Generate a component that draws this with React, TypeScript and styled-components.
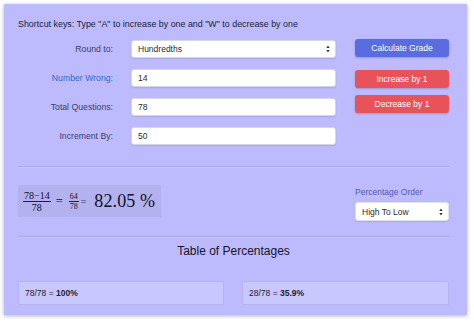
import React, { useState } from 'react'
import styled, { createGlobalStyle } from 'styled-components'

const GlobalStyle = createGlobalStyle`
  html, body {
    margin: 0;
    padding: 0;
    background: #ffffff;
  }
  body {
    font-family: 'Liberation Sans', Arial, sans-serif;
  }
`

const Panel = styled.div`
  box-sizing: border-box;
  margin: 4px;
  width: 463px;
  height: 311px;
  padding: 14px 18px 0 14px;
  background-color: #bdbbfe;
  box-shadow: 0 1px 4px rgba(40, 40, 80, 0.35);
  color: #1f1f3c;
`

const Hint = styled.p`
  margin: 0;
  font-size: 8.9px;
  line-height: 12px;
  color: #1c1c38;
  white-space: nowrap;
`

const FormRow = styled.div`
  display: flex;
  margin-top: 9px;
`

const Fields = styled.div`
  display: grid;
  grid-template-columns: 95px 205px;
  grid-auto-rows: 18px;
  column-gap: 18px;
  row-gap: 11px;
  padding-top: 1px;
  width: 318px;
`

const Label = styled.label<{ $highlight?: boolean }>`
  display: flex;
  align-items: center;
  justify-content: flex-end;
  font-size: 8.7px;
  color: ${({ $highlight }) => ($highlight ? '#2d6cc6' : '#3a3d66')};
  white-space: nowrap;
`

const Field = styled.div`
  box-sizing: border-box;
  display: flex;
  align-items: center;
  justify-content: space-between;
  height: 18px;
  padding: 0 5px 0 6px;
  background: #ffffff;
  border: 1px solid #d6d6e4;
  border-radius: 3px;
  box-shadow: 0 1px 1px rgba(60, 60, 110, 0.15);
  font-size: 8.5px;
  color: #2b2b2b;
`

const Buttons = styled.div`
  display: flex;
  flex-direction: column;
  margin-left: 19px;
  width: 94px;
`

const Button = styled.button<{ $tone: 'blue' | 'red'; $gap: number }>`
  box-sizing: border-box;
  height: 18px;
  margin-top: ${({ $gap }) => $gap}px;
  padding: 0;
  border: none;
  border-radius: 3px;
  background-color: ${({ $tone }) => ($tone === 'blue' ? '#5a6de0' : '#e8535a')};
  box-shadow: 0 1px 2px rgba(50, 40, 90, 0.25);
  color: #ffffff;
  font-family: 'Liberation Sans', Arial, sans-serif;
  font-size: 8.5px;
  cursor: pointer;
`

const Divider = styled.div<{ $top: number }>`
  height: 1px;
  margin-top: ${({ $top }) => $top}px;
  background-color: #a9a8e8;
  box-shadow: 0 1px 0 rgba(210, 210, 255, 0.5);
`

const ResultRow = styled.div`
  display: flex;
  justify-content: space-between;
  align-items: flex-start;
  margin-top: 18px;
`

const Formula = styled.div`
  box-sizing: border-box;
  display: flex;
  align-items: center;
  width: 143px;
  height: 32px;
  padding: 0 0 0 5px;
  background-color: #b3b2ee;
  font-family: 'Liberation Serif', 'Times New Roman', serif;
  color: #111122;
`

const Frac = styled.span<{ $size: number }>`
  display: inline-flex;
  flex-direction: column;
  align-items: center;
  font-size: ${({ $size }) => $size}px;
  line-height: ${({ $size }) => Math.round($size * 0.85)}px;
`

const Numer = styled.span`
  padding: 0 1px 1px;
  border-bottom: 0.8px solid #222;
`

const Denom = styled.span`
  padding-top: 1px;
`

const Eq = styled.span<{ $small?: boolean; $left: number; $right: number }>`
  margin: 0 ${({ $right }) => $right}px 0 ${({ $left }) => $left}px;
  font-size: ${({ $small }) => ($small ? 10 : 12.5)}px;
  color: ${({ $small }) => ($small ? '#3a3a5c' : '#111122')};
`

const Result = styled.span`
  font-size: 18px;
  letter-spacing: 0.1px;
  white-space: nowrap;
`

const OrderBox = styled.div`
  display: flex;
  flex-direction: column;
  width: 94px;
`

const OrderLabel = styled.span`
  font-size: 8.5px;
  line-height: 14px;
  color: #5558b4;
`

const OrderSelect = styled(Field)`
  margin-top: 3px;
  height: 19px;
  border-color: #e2e2ee;
`

const Heading = styled.h2`
  margin: 7px 0 0;
  font-size: 12px;
  line-height: 14px;
  font-weight: normal;
  text-align: center;
  color: #15152a;
`

const Cards = styled.div`
  display: grid;
  grid-template-columns: 206px 207px;
  column-gap: 18px;
  margin-top: 23px;
`

const Card = styled.div`
  box-sizing: border-box;
  display: flex;
  align-items: center;
  height: 24px;
  padding-left: 6px;
  background-color: #c8c7fe;
  border: 1px solid #b6b5f1;
  font-size: 8.5px;
  color: #1d1d38;
`

const Arrows = () => (
  <svg width='4' height='8' viewBox='0 0 4 8'>
    <path d='M2 0.5 L3.7 3 L0.3 3 Z' fill='#333' />
    <path d='M2 7.5 L3.7 5 L0.3 5 Z' fill='#333' />
  </svg>
)

const rows = [
  { label: 'Round to:', value: 'Hundredths', select: true },
  { label: 'Number Wrong:', value: '14', highlight: true },
  { label: 'Total Questions:', value: '78' },
  { label: 'Increment By:', value: '50' },
]

const percentages = [
  { ratio: '78/78', value: '100%' },
  { ratio: '28/78', value: '35.9%' },
]

export default function App() {
  const [wrong, setWrong] = useState(14)
  const total = 78
  const right = total - wrong
  const pct = ((right / total) * 100).toFixed(2)

  return (
    <>
      <GlobalStyle />
      <Panel>
        <Hint>Shortcut keys: Type "A" to increase by one and "W" to decrease by one</Hint>
        <FormRow>
          <Fields>
            {rows.map(row => (
              <React.Fragment key={row.label}>
                <Label $highlight={row.highlight}>{row.label}</Label>
                <Field>
                  <span>{row.label === 'Number Wrong:' ? wrong : row.value}</span>
                  {row.select && <Arrows />}
                </Field>
              </React.Fragment>
            ))}
          </Fields>
          <Buttons>
            <Button type='button' $tone='blue' $gap={0}>
              Calculate Grade
            </Button>
            <Button type='button' $tone='red' $gap={13} onClick={() => setWrong(w => w + 1)}>
              Increase by 1
            </Button>
            <Button type='button' $tone='red' $gap={7} onClick={() => setWrong(w => w - 1)}>
              Decrease by 1
            </Button>
          </Buttons>
        </FormRow>
        <Divider $top={21} />
        <ResultRow>
          <Formula>
            <Frac $size={10}>
              <Numer>
                {total}−{wrong}
              </Numer>
              <Denom>{total}</Denom>
            </Frac>
            <Eq $left={5} $right={6}>
              =
            </Eq>
            <Frac $size={8}>
              <Numer>{right}</Numer>
              <Denom>{total}</Denom>
            </Frac>
            <Eq $small $left={2} $right={8}>
              =
            </Eq>
            <Result>{pct} %</Result>
          </Formula>
          <OrderBox>
            <OrderLabel>Percentage Order</OrderLabel>
            <OrderSelect>
              <span>High To Low</span>
              <Arrows />
            </OrderSelect>
          </OrderBox>
        </ResultRow>
        <Divider $top={15} />
        <Heading>Table of Percentages</Heading>
        <Cards>
          {percentages.map(p => (
            <Card key={p.ratio}>
              {p.ratio} =&nbsp;<b>{p.value}</b>
            </Card>
          ))}
        </Cards>
      </Panel>
    </>
  )
}
